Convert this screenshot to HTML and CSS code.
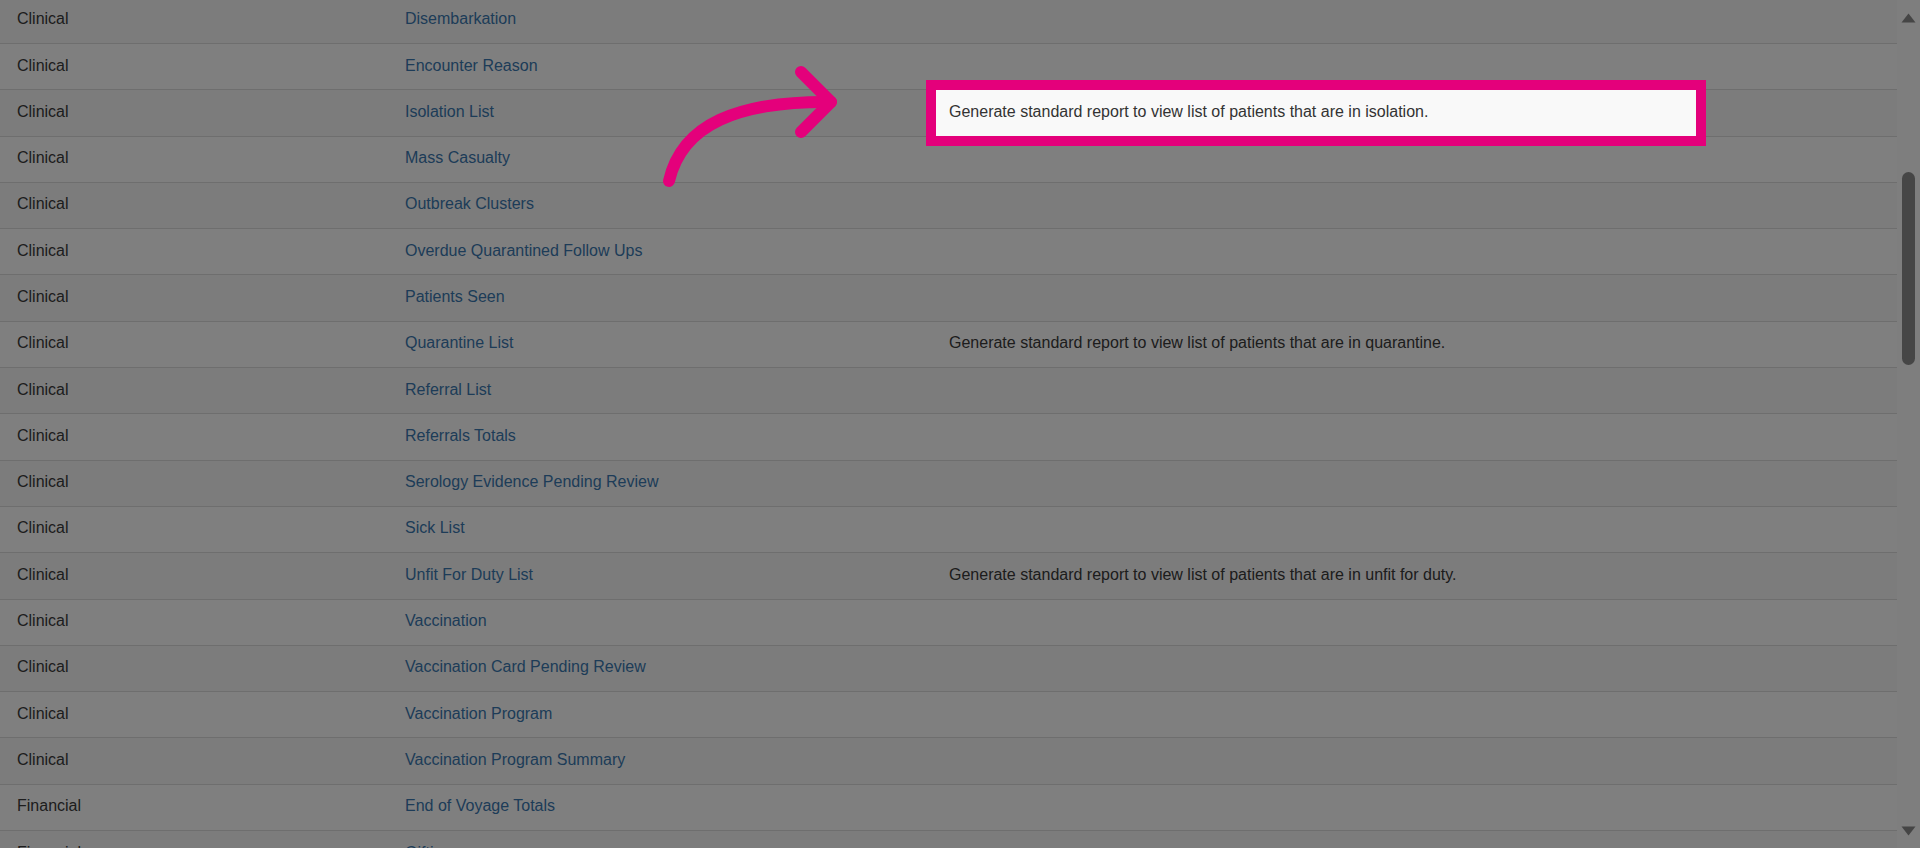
FILE: index.html
```html
<!DOCTYPE html>
<html lang="en">
<head>
    <meta charset="UTF-8">
    <meta name="viewport" content="width=device-width, initial-scale=1.0">
    <title>Reports</title>
    <link rel="stylesheet" href="styles.css">
</head>
<body>
    <div class="page">
        <div class="content">
            <table class="report-table">
                <colgroup>
                    <col class="col-category">
                    <col class="col-name">
                    <col class="col-desc">
                    <col>
                </colgroup>
                <tbody>
                    <tr><td>Clinical</td><td><a href="#">Disembarkation</a></td><td></td><td></td></tr>
                    <tr><td>Clinical</td><td><a href="#">Encounter Reason</a></td><td></td><td></td></tr>
                    <tr><td>Clinical</td><td><a href="#">Isolation List</a></td><td class="spot">Generate standard report to view list of patients that are in isolation.</td><td></td></tr>
                    <tr><td>Clinical</td><td><a href="#">Mass Casualty</a></td><td></td><td></td></tr>
                    <tr><td>Clinical</td><td><a href="#">Outbreak Clusters</a></td><td></td><td></td></tr>
                    <tr><td>Clinical</td><td><a href="#">Overdue Quarantined Follow Ups</a></td><td></td><td></td></tr>
                    <tr><td>Clinical</td><td><a href="#">Patients Seen</a></td><td></td><td></td></tr>
                    <tr><td>Clinical</td><td><a href="#">Quarantine List</a></td><td>Generate standard report to view list of patients that are in quarantine.</td><td></td></tr>
                    <tr><td>Clinical</td><td><a href="#">Referral List</a></td><td></td><td></td></tr>
                    <tr><td>Clinical</td><td><a href="#">Referrals Totals</a></td><td></td><td></td></tr>
                    <tr><td>Clinical</td><td><a href="#">Serology Evidence Pending Review</a></td><td></td><td></td></tr>
                    <tr><td>Clinical</td><td><a href="#">Sick List</a></td><td></td><td></td></tr>
                    <tr><td>Clinical</td><td><a href="#">Unfit For Duty List</a></td><td>Generate standard report to view list of patients that are in unfit for duty.</td><td></td></tr>
                    <tr><td>Clinical</td><td><a href="#">Vaccination</a></td><td></td><td></td></tr>
                    <tr><td>Clinical</td><td><a href="#">Vaccination Card Pending Review</a></td><td></td><td></td></tr>
                    <tr><td>Clinical</td><td><a href="#">Vaccination Program</a></td><td></td><td></td></tr>
                    <tr><td>Clinical</td><td><a href="#">Vaccination Program Summary</a></td><td></td><td></td></tr>
                    <tr><td>Financial</td><td><a href="#">End of Voyage Totals</a></td><td></td><td></td></tr>
                    <tr><td>Financial</td><td><a href="#">Gifting</a></td><td></td><td></td></tr>
                </tbody>
            </table>
        </div>

        <div class="scrollbar">
            <svg class="sb-arrow sb-up" width="15" height="10" viewBox="0 0 15 10"><path d="M7.5 0.5 L14.5 9.5 L0.5 9.5 Z" fill="#8a8a8a"/></svg>
            <div class="sb-thumb"></div>
            <svg class="sb-arrow sb-down" width="15" height="10" viewBox="0 0 15 10"><path d="M0.5 0.5 L14.5 0.5 L7.5 9.5 Z" fill="#8a8a8a"/></svg>
        </div>
    </div>

    <!-- walkthrough dimming + pointer -->
    <div class="dim"></div>
    <svg class="pointer" width="1920" height="848" viewBox="0 0 1920 848">
        <path d="M669 181 C682 124, 738 101, 831 102" fill="none" stroke="#e4007b" stroke-width="12" stroke-linecap="round"/>
        <path d="M801 72 L831 102 L801 132" fill="none" stroke="#e4007b" stroke-width="12" stroke-linecap="round" stroke-linejoin="round"/>
    </svg>
</body>
</html>
```

FILE: styles.css
```css
html, body {
    margin: 0;
    height: 100%;
    overflow: hidden;
}
body {
    background-color: #fff;
    font-family: 'Liberation Sans', Arial, sans-serif;
    font-size: 16px;
    color: #3a3a3a;
}
.page {
    display: flex;
    height: 100%;
}
.content {
    flex: 1;
    min-width: 0;
}
.report-table {
    width: 100%;
    table-layout: fixed;
    border-collapse: collapse;
    margin-top: -2.3px;
}
.col-category {
    width: 392px;
}
.col-name {
    width: 544px;
}
.col-desc {
    width: 760px;
}
.report-table td {
    padding: 10.5px 13px 12.5px;
    line-height: 22.3px;
    border-bottom: 1px solid #ddd;
    white-space: nowrap;
    overflow: hidden;
}
.report-table td:first-child {
    padding-left: 17px;
}
.report-table tr:nth-child(odd) td {
    background-color: #f9f9f9;
}
.report-table a {
    color: #3b78b0;
    text-decoration: none;
}
.report-table td.spot {
    position: relative;
    z-index: 2;
    background-color: #f9f9f9;
    color: #333;
    outline: 10px solid #e4007b;
}
.scrollbar {
    width: 23px;
    background-color: #fcfcfc;
    display: flex;
    flex-direction: column;
    align-items: center;
}
.sb-arrow {
    display: block;
}
.sb-up {
    margin-top: 13px;
}
.sb-thumb {
    width: 13px;
    height: 193px;
    margin-top: 149px;
    border-radius: 7px;
    background-color: #8d8d8d;
}
.sb-down {
    margin-top: auto;
    margin-bottom: 12px;
}
.dim {
    position: fixed;
    top: 0;
    left: 0;
    right: 0;
    bottom: 0;
    z-index: 1;
    background-color: rgba(0, 0, 0, 0.5);
}
.pointer {
    position: fixed;
    top: 0;
    left: 0;
    z-index: 3;
    pointer-events: none;
}
```
